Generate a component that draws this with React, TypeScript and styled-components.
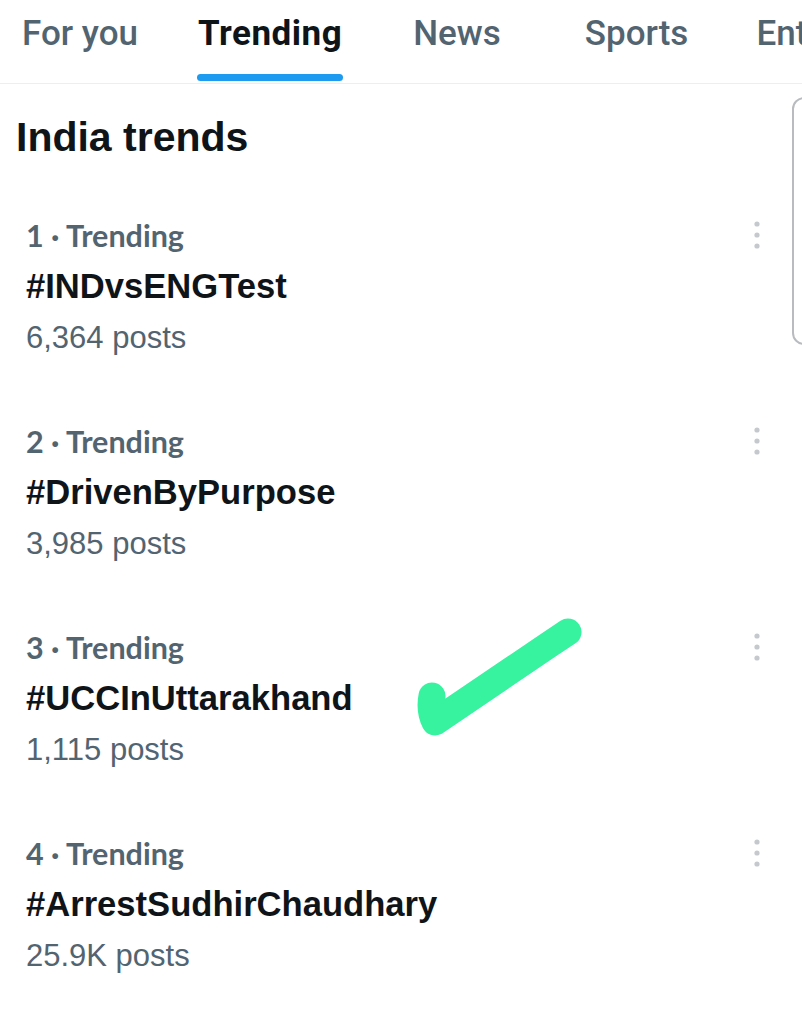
import styled, { createGlobalStyle } from "styled-components";

const GlobalStyle = createGlobalStyle`
  html, body {
    margin: 0;
    padding: 0;
    background: #ffffff;
  }
  body {
    width: 802px;
    height: 1024px;
    overflow: hidden;
    font-family: "Liberation Sans", Arial, sans-serif;
  }
`;

type Trend = {
  rank: number;
  tag: string;
  posts: string;
};

const trends: Trend[] = [
  { rank: 1, tag: "#INDvsENGTest", posts: "6,364 posts" },
  { rank: 2, tag: "#DrivenByPurpose", posts: "3,985 posts" },
  { rank: 3, tag: "#UCCInUttarakhand", posts: "1,115 posts" },
  { rank: 4, tag: "#ArrestSudhirChaudhary", posts: "25.9K posts" },
];

// space before each tab label
const tabs = [
  { label: "For you", space: 0 },
  { label: "Trending", space: 60 },
  { label: "News", space: 71 },
  { label: "Sports", space: 84 },
  { label: "Entertainment", space: 68 },
];

const MoreIcon = () => (
  <svg width="10" height="30" viewBox="0 0 10 30">
    <circle cx="5" cy="4" r="2.6" fill="#c5c9cd" />
    <circle cx="5" cy="15" r="2.6" fill="#c5c9cd" />
    <circle cx="5" cy="26" r="2.6" fill="#c5c9cd" />
  </svg>
);

const App = () => {
  return (
    <Page>
      <GlobalStyle />
      <TabBar>
        {tabs.map((tab) => (
          <Tab
            key={tab.label}
            $space={tab.space}
            $active={tab.label === "Trending"}
          >
            {tab.label}
          </Tab>
        ))}
      </TabBar>
      <Content>
        <Heading>India trends</Heading>
        <TrendList>
          {trends.map((trend) => (
            <TrendRow key={trend.rank}>
              <TrendText>
                <Meta>{trend.rank} · Trending</Meta>
                <Tag>{trend.tag}</Tag>
                <Posts>{trend.posts}</Posts>
              </TrendText>
              <MoreButton>
                <MoreIcon />
              </MoreButton>
            </TrendRow>
          ))}
        </TrendList>
        <SideCard />
        <CheckMark width="200" height="150" viewBox="0 0 200 150">
          <path
            d="M22 84 C 20 94, 21 102, 25 110 C 60 86, 110 52, 158 20"
            fill="none"
            stroke="#37f29f"
            strokeWidth="27"
            strokeLinecap="round"
            strokeLinejoin="round"
          />
        </CheckMark>
      </Content>
    </Page>
  );
};

const Page = styled.div`
  width: 802px;
  height: 1024px;
  overflow: hidden;
  background: #ffffff;
`;

const TabBar = styled.nav`
  display: flex;
  height: 83px;
  padding-left: 22px;
  border-bottom: 1.5px solid #eceff1;
  white-space: nowrap;
  overflow: hidden;
`;

const Tab = styled.div<{ $active?: boolean; $space: number }>`
  position: relative;
  flex-shrink: 0;
  margin-left: ${(p) => p.$space}px;
  padding-top: 13px;
  font-family: Roboto, "Liberation Sans", sans-serif;
  font-size: 35px;
  letter-spacing: ${(p) => (p.$active ? "0.5px" : "0")};
  font-weight: ${(p) => (p.$active ? 700 : 500)};
  color: ${(p) => (p.$active ? "#0f1419" : "#536471")};

  &::after {
    content: "";
    display: ${(p) => (p.$active ? "block" : "none")};
    position: absolute;
    left: -1px;
    right: -1px;
    bottom: 2px;
    height: 7px;
    border-radius: 4px;
    background: #1d9bf0;
  }
`;

const Content = styled.main`
  position: relative;
  padding: 25px 0 0 0;
`;

const Heading = styled.h1`
  margin: 0 0 0 16px;
  font-size: 41px;
  font-weight: 700;
  line-height: 56px;
  color: #0f1419;
`;

const TrendList = styled.div`
  display: flex;
  flex-direction: column;
  padding-top: 51px;
  gap: 18px;
`;

const TrendRow = styled.div`
  display: flex;
  justify-content: space-between;
  align-items: flex-start;
  height: 188px;
  padding: 0 40px 0 26px;
`;

const TrendText = styled.div`
  display: flex;
  flex-direction: column;
`;

const Meta = styled.div`
  font-family: Lato, "Liberation Sans", sans-serif;
  font-size: 30.5px;
  font-weight: 700;
  line-height: 38px;
  color: #536471;
`;

const Tag = styled.div`
  margin-top: 12px;
  font-size: 34.6px;
  font-weight: 700;
  line-height: 40px;
  color: #0f1419;
`;

const Posts = styled.div`
  margin-top: 12px;
  font-size: 31px;
  line-height: 40px;
  color: #536471;
`;

const MoreButton = styled.div`
  padding-top: 4px;
`;

const SideCard = styled.div`
  position: absolute;
  top: 13px;
  left: 792px;
  width: 40px;
  height: 244px;
  border: 2px solid #b9bcbf;
  border-radius: 12px;
`;

const CheckMark = styled.svg`
  position: absolute;
  left: 410px;
  top: 528px;
`;

export default App;
